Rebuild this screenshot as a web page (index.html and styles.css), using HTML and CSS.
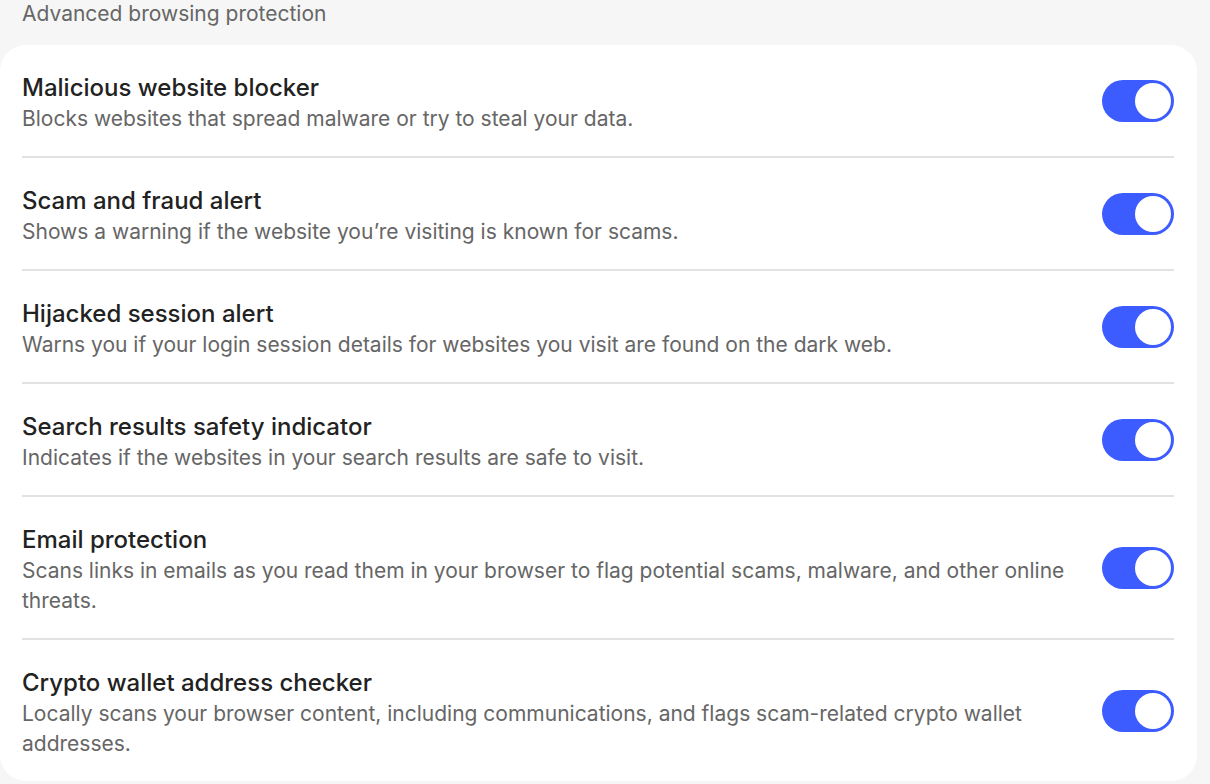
FILE: index.html
```html
<!DOCTYPE html>
<html lang="en">
  <head>
    <meta charset="UTF-8" />
    <meta name="viewport" content="width=device-width, initial-scale=1.0" />
    <title>Browsing protection</title>
    <link rel="stylesheet" href="styles.css">
  </head>
  <body>
    <div id="settings">
      <h3 class="section-title">Advanced browsing protection</h3>
      <div class="card">
        <div class="row">
          <div class="text">
            <div class="name">Malicious website blocker</div>
            <div class="desc">Blocks websites that spread malware or try to steal your data.</div>
          </div>
          <label class="toggle"><input type="checkbox" checked /><span class="knob"></span></label>
        </div>
        <div class="row">
          <div class="text">
            <div class="name">Scam and fraud alert</div>
            <div class="desc">Shows a warning if the website you’re visiting is known for scams.</div>
          </div>
          <label class="toggle"><input type="checkbox" checked /><span class="knob"></span></label>
        </div>
        <div class="row">
          <div class="text">
            <div class="name">Hijacked session alert</div>
            <div class="desc">Warns you if your login session details for websites you visit are found on the dark web.</div>
          </div>
          <label class="toggle"><input type="checkbox" checked /><span class="knob"></span></label>
        </div>
        <div class="row">
          <div class="text">
            <div class="name">Search results safety indicator</div>
            <div class="desc">Indicates if the websites in your search results are safe to visit.</div>
          </div>
          <label class="toggle"><input type="checkbox" checked /><span class="knob"></span></label>
        </div>
        <div class="row">
          <div class="text">
            <div class="name">Email protection</div>
            <div class="desc">Scans links in emails as you read them in your browser to flag potential scams, malware, and other online threats.</div>
          </div>
          <label class="toggle"><input type="checkbox" checked /><span class="knob"></span></label>
        </div>
        <div class="row">
          <div class="text">
            <div class="name">Crypto wallet address checker</div>
            <div class="desc">Locally scans your browser content, including communications, and flags scam-related crypto wallet addresses.</div>
          </div>
          <label class="toggle"><input type="checkbox" checked /><span class="knob"></span></label>
        </div>
      </div>
    </div>
  </body>
</html>
```

FILE: styles.css
```css
body {
  margin: 0;
  padding: 0;
  background-color: #f6f6f6;
  font-family: "Inter", "Noto Sans", sans-serif;
  overflow: hidden;
}

#settings {
  width: 1197px;
}

.section-title {
  margin: 0 0 17px 22px;
  font-size: 21px;
  font-weight: 400;
  line-height: 28px;
  color: #666666;
}

.card {
  background-color: #ffffff;
  border-radius: 26px;
  padding: 0 23px 0 22px;
}

.row {
  display: flex;
  align-items: center;
  gap: 36px;
  border-bottom: 2px solid #e2e2e2;
}
.row:last-child {
  border-bottom: none;
}

.text {
  flex: 1;
  padding: 27px 0 22px;
}

.name {
  font-size: 24px;
  line-height: 32px;
  font-weight: 500;
  color: #222222;
}

.desc {
  font-size: 21px;
  line-height: 30px;
  color: #666666;
}

.toggle {
  position: relative;
  flex: none;
  width: 72px;
  height: 42px;
  border-radius: 21px;
  background-color: #3d5cff;
}
.toggle input {
  display: none;
}
.knob {
  position: absolute;
  top: 3px;
  right: 3px;
  width: 36px;
  height: 36px;
  border-radius: 50%;
  background-color: #ffffff;
}
```
